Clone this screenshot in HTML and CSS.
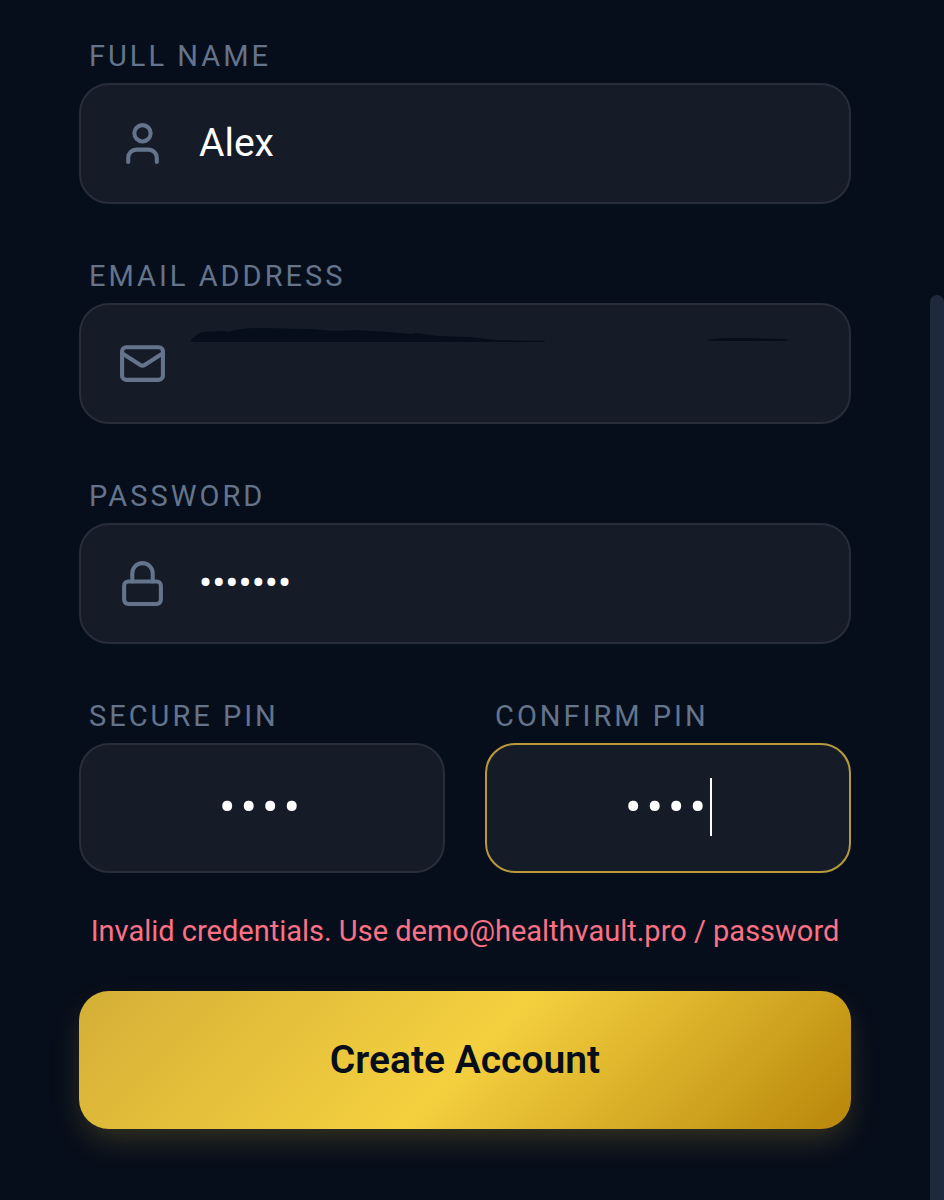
FILE: index.html
```html
<!DOCTYPE html>
<html lang="en">
<head>
    <meta charset="UTF-8">
    <meta name="viewport" content="width=device-width, initial-scale=1.0">
    <title>Create Account</title>
    <link rel="stylesheet" href="styles.css">
</head>
<body>
<form class="signup-form">
    <div class="field">
        <label for="fullName">FULL NAME</label>
        <div class="input-box">
            <svg class="icon" viewBox="0 0 24 24" aria-hidden="true">
                <path d="M19 21v-2a4 4 0 0 0-4-4H9a4 4 0 0 0-4 4v2"/>
                <circle cx="12" cy="7" r="4"/>
            </svg>
            <input type="text" id="fullName" value="Alex">
        </div>
    </div>
    <div class="field">
        <label for="email">EMAIL ADDRESS</label>
        <div class="input-box">
            <svg class="icon" viewBox="0 0 24 24" aria-hidden="true">
                <rect x="2" y="4" width="20" height="16" rx="2"/>
                <path d="m22 7-8.97 5.7a1.94 1.94 0 0 1-2.06 0L2 7"/>
            </svg>
            <input type="email" id="email">
            <svg class="smudge" viewBox="0 0 600 16" aria-hidden="true">
                <path d="M0 14C4 10 7 7 13 6l20-1 5 1c8-3 18-4 32-4l50 1 24 2 20-1 35 2 22 2 4-1 22 3 32 1 25 3 50 1v1H0z"/>
                <path d="M516 14c12-2 22-2 35-2l44 1 3 1-4 1h-72z"/>
            </svg>
        </div>
    </div>
    <div class="field">
        <label for="password">PASSWORD</label>
        <div class="input-box">
            <svg class="icon" viewBox="0 0 24 24" aria-hidden="true">
                <rect x="3" y="11" width="18" height="11" rx="2"/>
                <path d="M7 11V7a5 5 0 0 1 10 0v4"/>
            </svg>
            <input type="password" id="password" value="pass123">
        </div>
    </div>
    <div class="pin-row">
        <div class="field">
            <label for="pin">SECURE PIN</label>
            <div class="input-box pin-box">
                <input type="password" id="pin" maxlength="4" inputmode="numeric" value="1234">
            </div>
        </div>
        <div class="field">
            <label for="confirmPin">CONFIRM PIN</label>
            <div class="input-box pin-box active">
                <input type="password" id="confirmPin" maxlength="4" inputmode="numeric" value="1234">
                <span class="caret"></span>
            </div>
        </div>
    </div>
    <p class="error" role="alert">Invalid credentials. Use demo@healthvault.pro / password</p>
    <button type="submit" class="submit-btn">Create Account</button>
</form>
<div class="scroll-thumb"></div>
</body>
</html>
```
FILE: styles.css
```css
* {
    box-sizing: border-box;
}
body {
    margin: 0;
    min-height: 100vh;
    background-color: #070e1b;
    color: #ffffff;
    font-family: Roboto, 'Liberation Sans', sans-serif;
}
.signup-form {
    padding: 36px 93px 40px 79px;
}
.field {
    margin-bottom: 52px;
}
.field label {
    display: block;
    margin-bottom: 6px;
    padding-left: 10px;
    font-size: 29px;
    line-height: 41px;
    letter-spacing: 3px;
    color: #64748b;
}
.input-box {
    position: relative;
    display: flex;
    align-items: center;
    gap: 32px;
    height: 121px;
    padding: 0 37px;
    background-color: #161b28;
    border: 2px solid #282d39;
    border-radius: 30px;
}
.icon {
    flex: none;
    width: 49px;
    height: 49px;
    fill: none;
    stroke: #64748b;
    stroke-width: 2;
    stroke-linecap: round;
    stroke-linejoin: round;
}
.input-box input {
    flex: 1;
    min-width: 0;
    width: 100%;
    padding: 0 0 2px;
    border: none;
    outline: none;
    background: none;
    color: #ffffff;
    font-family: inherit;
    font-size: 39px;
}
.smudge {
    position: absolute;
    top: 21px;
    left: 110px;
    width: 600px;
    height: 16px;
    fill: #070e1b;
    pointer-events: none;
}
.pin-row {
    display: grid;
    grid-template-columns: 1fr 1fr;
    gap: 40px;
}
.pin-row .field {
    margin-bottom: 38px;
}
.input-box.pin-box {
    height: 130px;
}
.pin-box input {
    text-align: center;
    font-size: 49px;
    letter-spacing: 5px;
}
.pin-box.active {
    border-color: #b89a3a;
}
.caret {
    position: absolute;
    top: 33px;
    left: calc(50% + 42px);
    width: 2px;
    height: 58px;
    background-color: #ffffff;
}
.error {
    margin: 0 0 40px;
    text-align: center;
    font-size: 29px;
    line-height: 40px;
    color: #fb7185;
}
.submit-btn {
    display: block;
    width: 100%;
    height: 138px;
    border: none;
    border-radius: 30px;
    background: linear-gradient(135deg, #d4af37 0%, #f4d03f 50%, #b8860b 100%);
    box-shadow: 0 14px 32px -6px rgba(212, 175, 55, 0.25);
    color: #070e1b;
    font-family: inherit;
    font-size: 39px;
    font-weight: 600;
    cursor: pointer;
}
.scroll-thumb {
    position: fixed;
    top: 295px;
    right: 0;
    bottom: 0;
    width: 14px;
    border-radius: 7px 7px 0 0;
    background-color: #1e293b;
}
```
